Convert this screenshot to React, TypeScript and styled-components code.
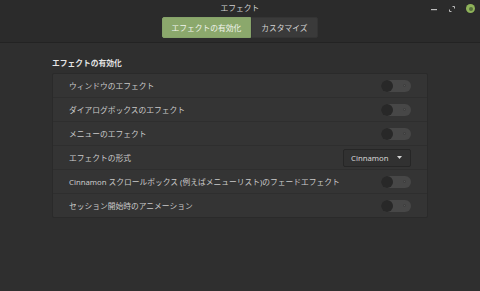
import React, { useState } from 'react';
import styled, { createGlobalStyle } from 'styled-components';

const GlobalStyle = createGlobalStyle`
  html, body {
    margin: 0;
    padding: 0;
    background: #2f2f2f;
  }
  body {
    font-family: 'Noto Sans', 'Noto Sans CJK JP', sans-serif;
  }
`;

const Window = styled.div`
  width: 480px;
  height: 291px;
  background: #2f2f2f;
  color: #dadada;
  display: flex;
  flex-direction: column;
  overflow: hidden;
`;

const HeaderBar = styled.div`
  height: 42px;
  background: #2b2b2b;
  border-bottom: 1px solid #232323;
  display: flex;
  flex-direction: column;
  align-items: center;
  position: relative;
`;

const Title = styled.div`
  font-size: 7.75px;
  line-height: 17px;
  height: 17px;
  color: #d0d0d0;
`;

const Switcher = styled.div`
  display: flex;
  height: 21px;
`;

const SwitchTab = styled.div<{ active: boolean }>`
  display: flex;
  align-items: center;
  padding: 0 ${({ active }) => (active ? '8.5px' : '9.5px')};
  font-size: 7.75px;
  color: ${({ active }) => (active ? '#f2f5ee' : '#d4d4d4')};
  background: ${({ active }) => (active ? '#8ba86c' : '#3a3a3a')};
  border: 1px solid ${({ active }) => (active ? '#86a36a' : '#343434')};
  border-radius: ${({ active }) => (active ? '2px 0 0 2px' : '0 2px 2px 0')};
  cursor: pointer;
`;

const Controls = styled.div`
  position: absolute;
  top: 0;
  right: 5px;
  height: 17px;
  display: flex;
  align-items: center;
  gap: 10px;
`;

const CloseDot = styled.div`
  width: 9px;
  height: 9px;
  border-radius: 50%;
  background: #8fb35a;
  display: flex;
  align-items: center;
  justify-content: center;
  &::after {
    content: '';
    width: 4px;
    height: 4px;
    border-radius: 50%;
    background: #55703a;
  }
`;

const Content = styled.div`
  padding: 10px 52px 0 52px;
  display: flex;
  flex-direction: column;
`;

const SectionTitle = styled.div`
  font-size: 7.75px;
  font-weight: 700;
  color: #e4e4e4;
  line-height: 20px;
  height: 20px;
`;

const Frame = styled.div`
  background: #343434;
  border: 1px solid #2a2a2a;
  border-radius: 2px;
  display: flex;
  flex-direction: column;
`;

const Row = styled.div<{ last?: boolean }>`
  height: 23px;
  display: flex;
  align-items: center;
  justify-content: space-between;
  padding: 0 16px 0 16px;
  border-bottom: ${({ last }) => (last ? 'none' : '1px solid #2e2e2e')};
`;

const Label = styled.span`
  font-size: 7.75px;
  color: #cacaca;
`;

const Track = styled.div<{ on: boolean }>`
  width: 30px;
  height: 12px;
  border-radius: 6px;
  background: ${({ on }) => (on ? '#8ba86c' : '#474747')};
  position: relative;
  cursor: pointer;
  &::after {
    content: '';
    position: absolute;
    right: 5px;
    top: 4px;
    width: 3px;
    height: 3px;
    border-radius: 50%;
    border: 1px solid #3d3d3d;
    box-sizing: border-box;
    background: #555;
  }
`;

const Knob = styled.div<{ on: boolean }>`
  position: absolute;
  top: 0;
  left: ${({ on }) => (on ? '18px' : '0')};
  width: 12px;
  height: 12px;
  border-radius: 50%;
  background: #282828;
`;

const Combo = styled.div`
  width: 68px;
  height: 18px;
  box-sizing: border-box;
  background: #313131;
  border: 1px solid #262626;
  border-radius: 2px;
  display: flex;
  align-items: center;
  justify-content: space-between;
  padding: 0 8px 0 7px;
  font-size: 7.75px;
  color: #d6d6d6;
`;

const Toggle = () => {
  const [on, setOn] = useState(false);
  return (
    <Track on={on} onClick={() => setOn(!on)}>
      <Knob on={on} />
    </Track>
  );
};

const rows = [
  'ウィンドウのエフェクト',
  'ダイアログボックスのエフェクト',
  'メニューのエフェクト',
  'エフェクトの形式',
  'Cinnamon スクロールボックス (例えばメニューリスト)のフェードエフェクト',
  'セッション開始時のアニメーション',
];

export default function App() {
  const [tab, setTab] = useState(0);
  return (
    <Window>
      <GlobalStyle />
      <HeaderBar>
        <Title>エフェクト</Title>
        <Switcher>
          <SwitchTab active={tab === 0} onClick={() => setTab(0)}>
            エフェクトの有効化
          </SwitchTab>
          <SwitchTab active={tab === 1} onClick={() => setTab(1)}>
            カスタマイズ
          </SwitchTab>
        </Switcher>
        <Controls>
          <svg width="8" height="8" viewBox="0 0 8 8">
            <rect x="1" y="4" width="6" height="1.2" fill="#bdbdbd" />
          </svg>
          <svg width="8" height="8" viewBox="0 0 8 8">
            <path d="M4.5 1.5h2v2M3.5 6.5h-2v-2" stroke="#bdbdbd" strokeWidth="1" fill="none" />
          </svg>
          <CloseDot />
        </Controls>
      </HeaderBar>
      <Content>
        <SectionTitle>エフェクトの有効化</SectionTitle>
        <Frame>
          {rows.map((r, i) => (
            <Row key={r} last={i === rows.length - 1}>
              <Label>{r}</Label>
              {i === 3 ? (
                <Combo>
                  <span>Cinnamon</span>
                  <svg width="5" height="3" viewBox="0 0 5 3">
                    <path d="M0 0h5L2.5 3z" fill="#d6d6d6" />
                  </svg>
                </Combo>
              ) : (
                <Toggle />
              )}
            </Row>
          ))}
        </Frame>
      </Content>
    </Window>
  );
}
